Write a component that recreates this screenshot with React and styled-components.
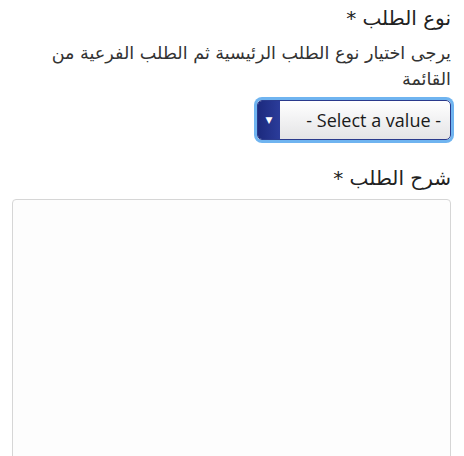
import React from "react";
import styled, { createGlobalStyle } from "styled-components";

const GlobalStyle = createGlobalStyle`
  html, body {
    margin: 0;
    padding: 0;
    background: #ffffff;
  }
  body {
    font-family: "DejaVu Sans", "Noto Sans", sans-serif;
    color: #222;
  }
`;

const Form = styled.form`
  direction: rtl;
  display: flex;
  flex-direction: column;
  padding: 3px 13px 0 12px;
  width: 464px;
  height: 456px;
  overflow: hidden;
  box-sizing: border-box;
`;

const Field = styled.div`
  display: flex;
  flex-direction: column;
  align-items: stretch;
  margin-bottom: ${(p) => p.$gap || 0}px;
`;

const Label = styled.label`
  font-size: 20px;
  line-height: 30px;
  color: #222;
  margin-bottom: ${(p) => p.$space || 4}px;
`;

const Help = styled.p`
  margin: 0 0 8px;
  font-size: 17.6px;
  line-height: 26px;
  color: #333;
`;

const SelectWrap = styled.div`
  align-self: flex-start;
  display: flex;
  direction: ltr;
  width: 192px;
  height: 38px;
  border: 1px solid #2a3a8c;
  border-radius: 5px;
  overflow: hidden;
  box-shadow: 0 0 0 3px #6fb4f0;
  background: linear-gradient(#ffffff, #e4e4e6);
`;

const Arrow = styled.span`
  width: 22px;
  display: flex;
  align-items: center;
  justify-content: center;
  background: linear-gradient(90deg, #1c2a7e, #2b3c9a);
  color: #fff;
  font-size: 9px;
`;

const SelectText = styled.span`
  flex: 1;
  display: flex;
  align-items: center;
  justify-content: flex-end;
  padding-right: 9px;
  font-family: "Open Sans", "Noto Sans", sans-serif;
  font-size: 18px;
  color: #1a1a1a;
`;

const TextArea = styled.textarea`
  display: block;
  width: 100%;
  height: 300px;
  box-sizing: border-box;
  border: 1px solid #d6d6d6;
  border-radius: 4px;
  background: #fdfdfd;
  resize: none;
  outline: none;
`;

export default function App() {
  return (
    <>
      <GlobalStyle />
      <Form>
        <Field $gap={23}>
          <Label $space={7}>نوع الطلب *</Label>
          <Help>يرجى اختيار نوع الطلب الرئيسية ثم الطلب الفرعية من القائمة</Help>
          <SelectWrap>
            <Arrow>▼</Arrow>
            <SelectText>- Select a value -</SelectText>
          </SelectWrap>
        </Field>
        <Field>
          <Label $space={6}>شرح الطلب *</Label>
          <TextArea />
        </Field>
      </Form>
    </>
  );
}
